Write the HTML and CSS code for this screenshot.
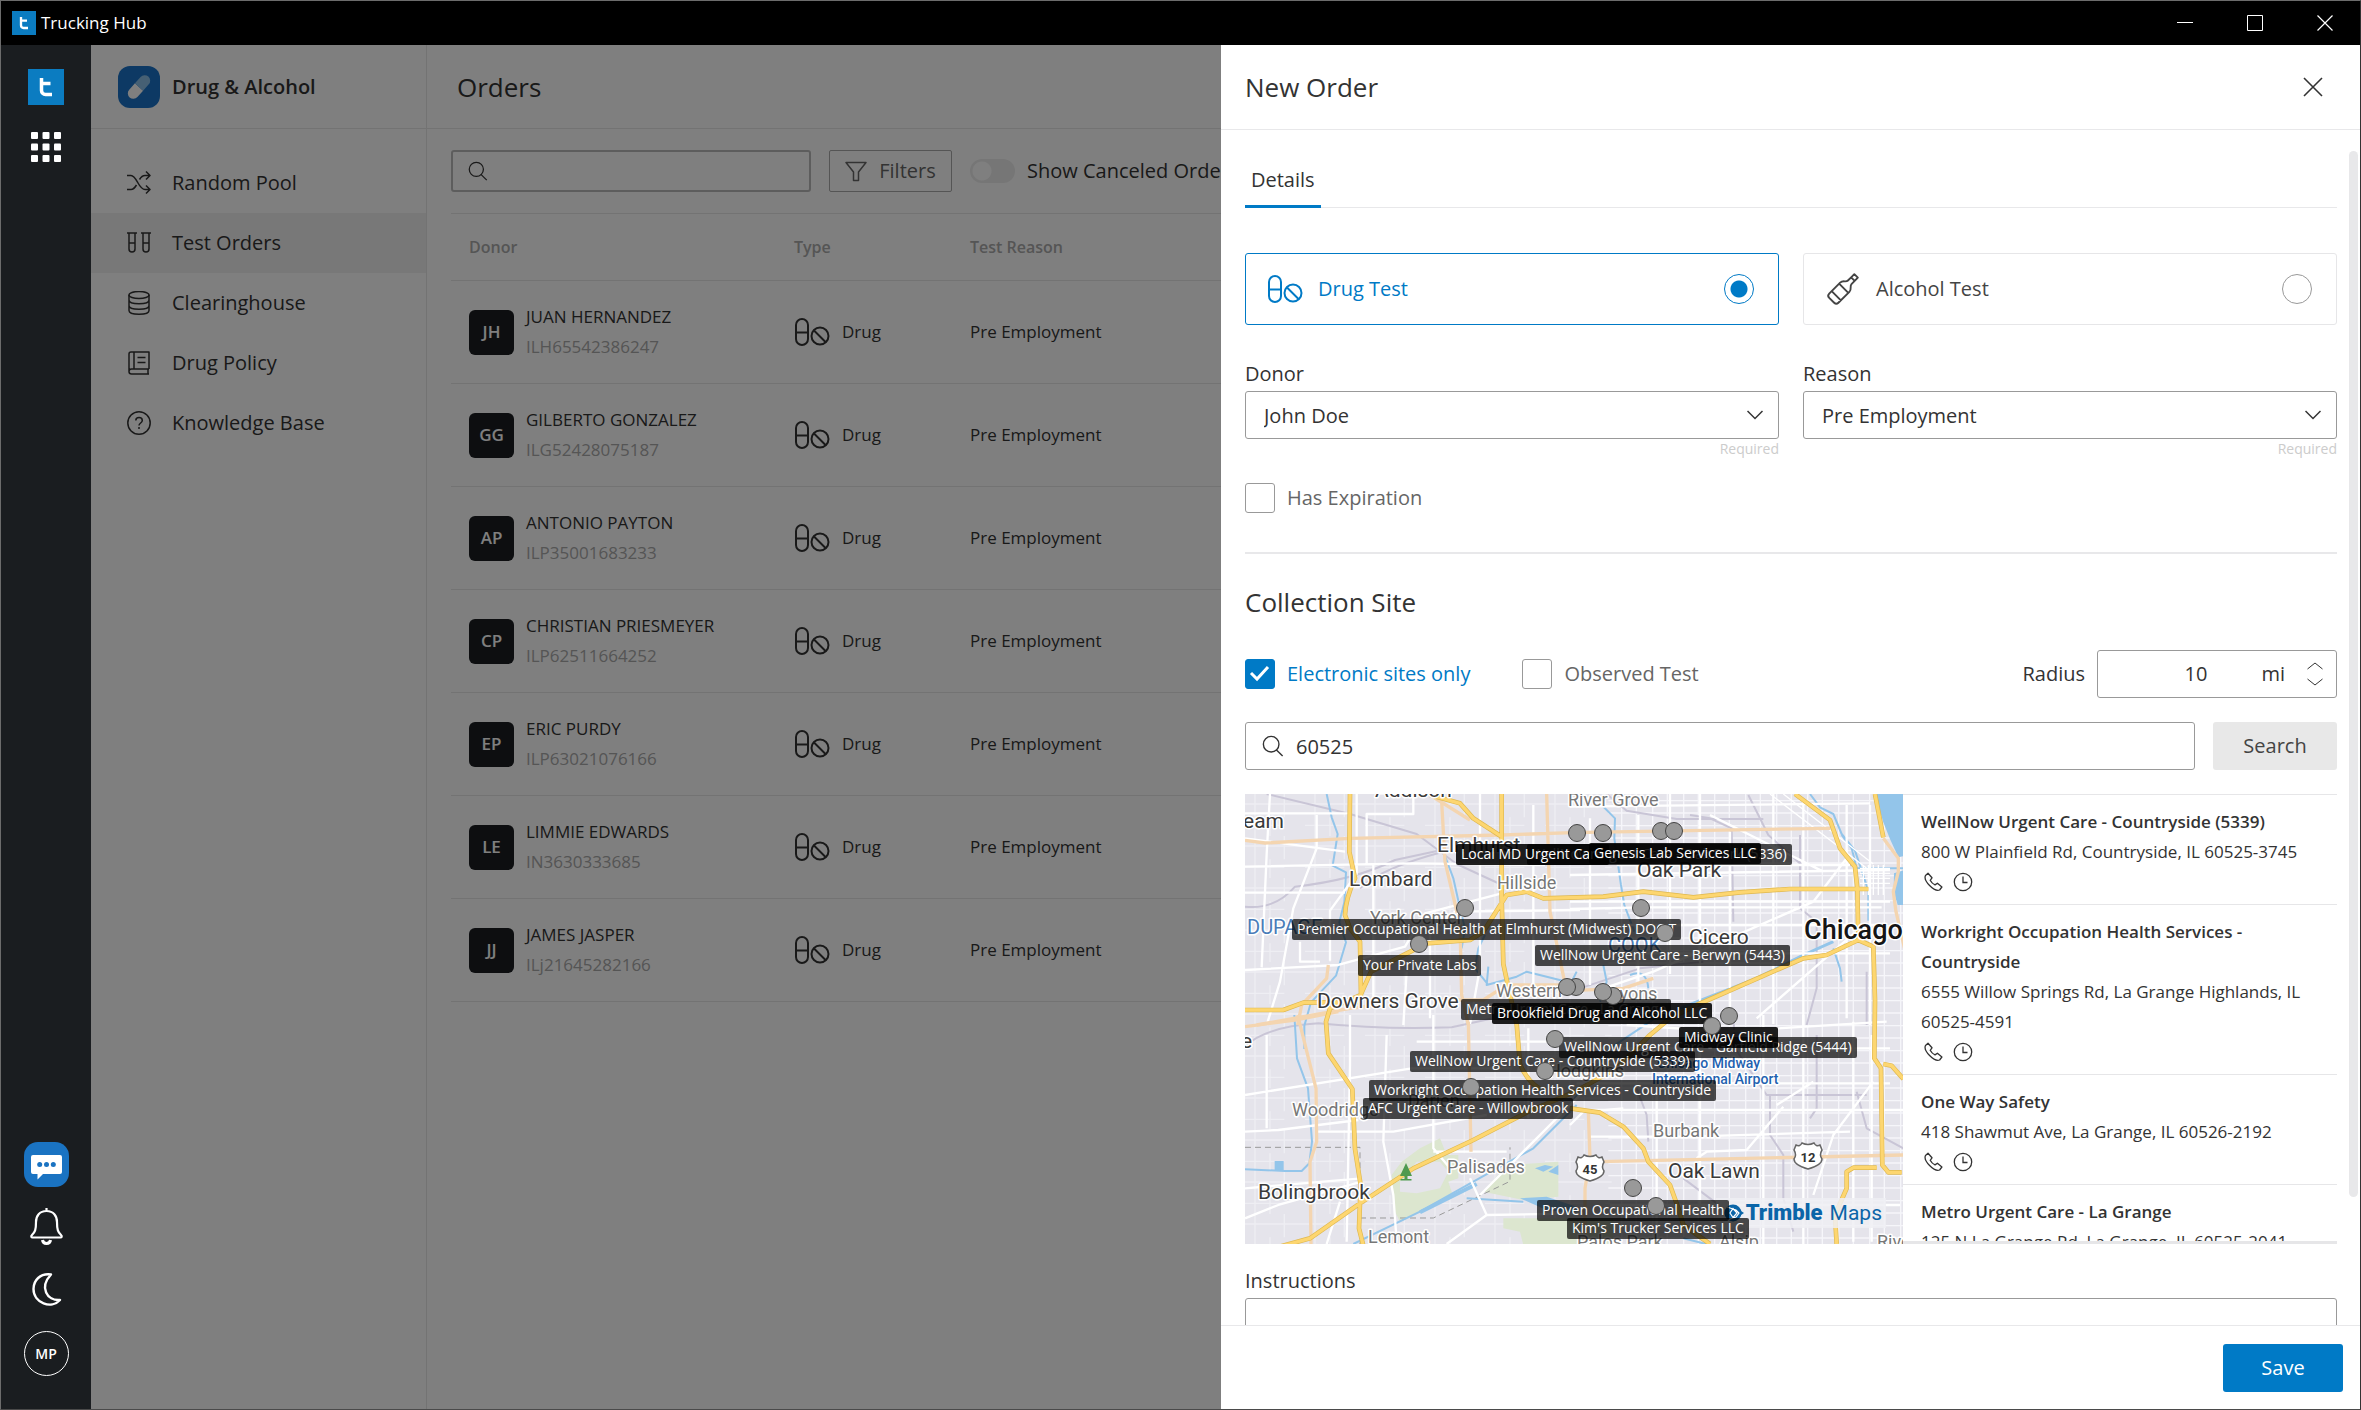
FILE: index.html
```html
<!DOCTYPE html>
<html lang="en">
<head>
<meta charset="utf-8">
<meta name="viewport" content="width=device-width, initial-scale=1">
<title>Trucking Hub</title>
<link rel="stylesheet" href="styles.css">
</head>
<body>
<svg class="sprite" aria-hidden="true">
  <symbol id="i-t" viewBox="0 0 36 36"><path d="M13.500 9v12.500a4 4 0 0 0 4 4h6.500M13.500 14.500h9" fill="none" stroke="#fff" stroke-width="3.500"/></symbol>
  <symbol id="i-drug" viewBox="0 0 36 28"><g fill="none" stroke="currentColor" stroke-width="2"><rect x="2" y="1" width="12" height="26" rx="6"/><path d="M2 14.500h12"/><circle cx="26" cy="18" r="8.500"/><path d="M20 12.500l12 12"/></g></symbol>
  <symbol id="i-search" viewBox="0 0 24 24"><g fill="none" stroke="currentColor" stroke-width="1.500"><circle cx="10" cy="10" r="8.500"/><path d="M15.500 16l7 7"/></g></symbol>
  <symbol id="i-x" viewBox="0 0 20 20"><path d="M1 1l18 18M19 1L1 19" fill="none" stroke="currentColor" stroke-width="1.600"/></symbol>
  <symbol id="i-phone" viewBox="0 0 20 20"><path d="M2.500 3.500L5 1.200l4 4.600-1.800 2.500c1 2 2.600 3.600 4.800 4.600l2.400-1.700 4.500 3.800-2.300 3c-2.400.9-6.500-.9-10-4.500S1.400 5.800 2.500 3.500z" fill="none" stroke="currentColor" stroke-width="1.300" stroke-linejoin="round"/></symbol>
  <symbol id="i-clock" viewBox="0 0 20 20"><g fill="none" stroke="currentColor" stroke-width="1.300"><circle cx="10" cy="10" r="8.700"/><path d="M10 4.500V10.500h4.500"/></g></symbol>
</svg>

<div class="window">
  <header class="titlebar">
    <svg class="titlebar-logo"><use href="#i-t"/></svg>
    <span class="titlebar-name">Trucking Hub</span>
    <div class="window-controls">
      <button aria-label="Minimize"><svg viewBox="0 0 16 16"><path d="M0 7.500h16" stroke="#fff"/></svg></button>
      <button aria-label="Maximize"><svg viewBox="0 0 16 16"><path d="M.5.5h15v15h-15z" fill="none" stroke="#fff"/></svg></button>
      <button aria-label="Close window"><svg viewBox="0 0 16 16"><path d="M.5.5l15 15M15.500.5l-15 15" stroke="#fff" stroke-width="1.200"/></svg></button>
    </div>
  </header>

  <div class="workspace">
    <nav class="rail" aria-label="Apps">
      <a href="#home" class="rail-logo" aria-label="Home"><svg><use href="#i-t"/></svg></a>
      <button class="rail-apps" aria-label="All apps"><svg viewBox="0 0 30 30" fill="#fff"><rect width="7" height="7" rx="1"/><rect x="11.500" width="7" height="7" rx="1"/><rect x="23" width="7" height="7" rx="1"/><rect y="11.500" width="7" height="7" rx="1"/><rect x="11.500" y="11.500" width="7" height="7" rx="1"/><rect x="23" y="11.500" width="7" height="7" rx="1"/><rect y="23" width="7" height="7" rx="1"/><rect x="11.500" y="23" width="7" height="7" rx="1"/><rect x="23" y="23" width="7" height="7" rx="1"/></svg></button>
      <div class="rail-bottom">
        <button class="rail-chat" aria-label="Messages"><svg viewBox="0 0 45 45"><path d="M9 13h27a2 2 0 0 1 2 2v15a2 2 0 0 1-2 2H19l-5.500 5.500V32H9a2 2 0 0 1-2-2V15a2 2 0 0 1 2-2z" fill="#fff"/><g fill="#1a73c2"><circle cx="15.700" cy="22.500" r="2.500"/><circle cx="22.500" cy="22.500" r="2.500"/><circle cx="29.300" cy="22.500" r="2.500"/></g></svg></button>
        <button aria-label="Notifications"><svg viewBox="0 0 45 45" fill="none" stroke="#fff" stroke-width="2.200"><path d="M22.500 3v3M22.500 6c-7 0-10.500 5-10.500 11 0 8-1 10-4 13-1.500 1.500-.5 2.500.5 2.500h28c1 0 2-1 .5-2.500-3-3-4-5-4-13 0-6-3.500-11-10.500-11z"/><path d="M18.500 35c.5 4.500 7.500 4.500 8 0" stroke-width="3"/></svg></button>
        <button aria-label="Dark mode"><svg viewBox="0 0 45 45" fill="none" stroke="#fff" stroke-width="2.400" stroke-linejoin="round"><path d="M27 6.500C16 5 9.500 12.500 9.500 21c0 14 18 20.500 26.500 11-13 1-21-12.500-9-25.500z"/></svg></button>
        <button class="rail-user" aria-label="Account">MP</button>
      </div>
    </nav>

    <aside class="sidebar">
      <div class="sidebar-head">
        <svg class="app-icon" viewBox="0 0 42 42"><rect width="42" height="42" rx="12" fill="#1a73c8"/><g transform="rotate(-48 21 21)"><path d="M21 15.500H12.500a5.500 5.500 0 0 0 0 11H21z" fill="#fff"/><path d="M21 15.500h8.500a5.500 5.500 0 0 1 0 11H21z" fill="#8cc0e8"/></g></svg>
        <span>Drug &amp; Alcohol</span>
      </div>
      <ul class="menu">
        <li><a href="#pool"><svg viewBox="0 0 24 24"><path d="M0 4.500h4c3 0 5 4 7 7.500s4 6.500 7 6.500h5M0 18.500h4c2.500 0 4-2 5.500-4.500M12.500 8.500c1.500-2.500 3-4 5.500-4h5M19 .5l4 4-4 4M19 14.500l4 4-4 4"/></svg>Random Pool</a></li>
        <li class="active"><a href="#orders"><svg viewBox="0 0 24 24"><path d="M0 2h10M14 2h10M2 2v16a3 3 0 0 0 6 0V2M16 2v16a3 3 0 0 0 6 0V2M2 12h6M16 12h6"/></svg>Test Orders</a></li>
        <li><a href="#clearing"><svg viewBox="0 0 24 24"><ellipse cx="12" cy="4" rx="10" ry="3.500"/><path d="M2 4v15.500c0 5 20 5 20 0V4M2 9c0 5 20 5 20 0M2 14.500c0 5 20 5 20 0"/></svg>Clearinghouse</a></li>
        <li><a href="#policy"><svg viewBox="0 0 24 24"><path d="M22 18V1H4a2 2 0 0 0-2 2v18M7 1v17M10.500 6.500h8M10.500 11.500h8M22 18H4.500a2.500 2.500 0 0 0 0 5H22M21 18v5"/></svg>Drug Policy</a></li>
        <li><a href="#kb"><svg viewBox="0 0 24 24"><circle cx="12" cy="12" r="11.200"/><path d="M8.800 9.500c0-4 6.500-4 6.500 0 0 2.500-3.300 2.500-3.300 5M12 16v2"/></svg>Knowledge Base</a></li>
      </ul>
    </aside>

    <main class="main">
      <div class="main-head"><h1>Orders</h1></div>
      <div class="content">
        <div class="toolbar">
          <div class="searchbox"><svg><use href="#i-search"/></svg><input type="search" aria-label="Search orders"></div>
          <button class="filters"><svg viewBox="0 0 22 22"><path d="M1 2.500h20L13.500 12v8.500h-5V12z" fill="none" stroke="currentColor" stroke-width="1.500" stroke-linejoin="round"/></svg>Filters</button>
          <label class="toggle"><input type="checkbox">Show Canceled Orders</label>
        </div>
        <table class="orders">
          <thead><tr><th class="c-donor">Donor</th><th class="c-type">Type</th><th>Test Reason</th></tr></thead>
          <tbody>
            <tr><td><div class="donor"><b>JH</b><p>JUAN HERNANDEZ<small>ILH65542386247</small></p></div></td><td><div class="type"><svg><use href="#i-drug"/></svg>Drug</div></td><td>Pre Employment</td></tr>
            <tr><td><div class="donor"><b>GG</b><p>GILBERTO GONZALEZ<small>ILG52428075187</small></p></div></td><td><div class="type"><svg><use href="#i-drug"/></svg>Drug</div></td><td>Pre Employment</td></tr>
            <tr><td><div class="donor"><b>AP</b><p>ANTONIO PAYTON<small>ILP35001683233</small></p></div></td><td><div class="type"><svg><use href="#i-drug"/></svg>Drug</div></td><td>Pre Employment</td></tr>
            <tr><td><div class="donor"><b>CP</b><p>CHRISTIAN PRIESMEYER<small>ILP62511664252</small></p></div></td><td><div class="type"><svg><use href="#i-drug"/></svg>Drug</div></td><td>Pre Employment</td></tr>
            <tr><td><div class="donor"><b>EP</b><p>ERIC PURDY<small>ILP63021076166</small></p></div></td><td><div class="type"><svg><use href="#i-drug"/></svg>Drug</div></td><td>Pre Employment</td></tr>
            <tr><td><div class="donor"><b>LE</b><p>LIMMIE EDWARDS<small>IN3630333685</small></p></div></td><td><div class="type"><svg><use href="#i-drug"/></svg>Drug</div></td><td>Pre Employment</td></tr>
            <tr><td><div class="donor"><b>JJ</b><p>JAMES JASPER<small>ILj21645282166</small></p></div></td><td><div class="type"><svg><use href="#i-drug"/></svg>Drug</div></td><td>Pre Employment</td></tr>
          </tbody>
        </table>
      </div>
    </main>

    <div class="scrim"></div>

    <form class="drawer" aria-label="New Order">
      <div class="drawer-head"><h2>New Order</h2><button type="button" class="close" aria-label="Close"><svg><use href="#i-x"/></svg></button></div>
      <div class="drawer-body">
        <div class="tabs"><button type="button" class="tab">Details</button></div>

        <div class="pair">
          <label class="card selected"><svg class="card-icon"><use href="#i-drug"/></svg><span>Drug Test</span><input type="radio" name="test" checked></label>
          <label class="card"><svg class="card-icon" viewBox="0 0 36 28"><g transform="translate(18 14) rotate(45)" fill="none" stroke="currentColor" stroke-width="1.900" stroke-linejoin="round"><path d="M-2.500-18.500h5v4.500h-5zM-2.500-14v4.500c0 3-4 3-4 7V13a3 3 0 0 0 3 3h7a3 3 0 0 0 3-3V-2.500c0-4-4-4-4-7V-14M-6.500-1h13M-6.500 9.500h13"/></g></svg><span>Alcohol Test</span><input type="radio" name="test"></label>
        </div>

        <div class="pair fields">
          <div class="field"><label for="donor">Donor</label>
            <div class="select"><select id="donor"><option>John Doe</option></select><svg viewBox="0 0 16 10"><path d="M.5 1l7.500 7.500L15.500 1" fill="none" stroke="currentColor" stroke-width="1.500"/></svg></div>
            <span class="hint">Required</span></div>
          <div class="field"><label for="reason">Reason</label>
            <div class="select"><select id="reason"><option>Pre Employment</option></select><svg viewBox="0 0 16 10"><path d="M.5 1l7.500 7.500L15.500 1" fill="none" stroke="currentColor" stroke-width="1.500"/></svg></div>
            <span class="hint">Required</span></div>
        </div>

        <label class="check"><input type="checkbox">Has Expiration</label>

        <h2 class="section">Collection Site</h2>
        <div class="options">
          <label class="check on"><input type="checkbox" checked>Electronic sites only</label>
          <label class="check"><input type="checkbox">Observed Test</label>
          <label class="radius-label" for="radius">Radius</label>
          <div class="radius"><input id="radius" type="text" inputmode="numeric" value="10"><span>mi</span>
            <svg viewBox="0 0 16 24"><path d="M.5 7L8 1l7.500 6M.5 17L8 23l7.500-6" fill="none" stroke="currentColor"/></svg></div>
        </div>
        <div class="lookup">
          <div class="searchbox"><svg><use href="#i-search"/></svg><input type="text" aria-label="ZIP code" value="60525"></div>
          <button type="button" class="btn">Search</button>
        </div>

        <div class="sites">
          <div class="map">
            <svg class="map-art" viewBox="0 0 658 450" preserveAspectRatio="xMinYMin slice">
              <defs>
                <pattern id="fine" width="93" height="75" patternUnits="userSpaceOnUse"><path d="M14 0v75M58 0v75M0 20h93M0 57h93" stroke="#f6f6fa" stroke-width="4" fill="none"/></pattern>
                <pattern id="block" width="180" height="126" patternUnits="userSpaceOnUse"><path d="M30 0v126M118 0v70M75 70v56M0 30h180M0 94h118" stroke="#f8f8fb" stroke-width="4" fill="none"/></pattern>
              </defs>
              <rect width="658" height="450" fill="#e5e4eb"/>
              <g transform="scale(.33333)" fill="none" stroke-linejoin="round">
                <path d="M0 0H1100V1350H0z" fill="url(#block)" opacity=".5"/>
                <path d="M1090 0H1974V1350H1090z" fill="url(#fine)"/>
                <g transform="translate(-15 663)">
                  <path d="M455 480l30-40 55-40 60-30 20 50h35v70l-30 10 15 45-160 75-20-40z" fill="#dce6cf"/>
                  <path d="M480 500l50-60h70l25 30-25 50-70 15-50-5z" fill="#e5e4eb"/>
                  <path d="M730 530l70-80 155-10v105l-105 10zM790 610h330v80H850l-10-40-50-10z" fill="#dce6cf"/>
                  <path d="M840 550l80-5 90 30v20l-90-10zM104 438h27v28h-27zM885 460l30-10 25 5-30 15zM925 470l30-20v30z" fill="#93c5ea"/>
                </g>
                <!-- Lake Michigan shoreline -->
                <g transform="translate(975 -27)"><path d="M915 27h90v185l-20 5-25-55-20-50zM972 265l33-10v105h-22l-12-40z" fill="#93c5ea"/></g>
                <!-- rail lines -->
                <g stroke="#c9c5d6" stroke-width="6">
                  <g transform="translate(-15 -27)"><path d="M80 27l250 60 200 60 120 90 130 60M15 365q90 10 150-60 180-20 300-80l140-30M360 310q60-60 250-110"/></g>
                  <g transform="translate(975 -27)"><path d="M110 27l60 50 150 25 260 0M360 90l60 10 65 30 5 280M690 150v220l50 40v200l-30 110M535 30l60 120 100 90h150M30 610l180-60 190-20M890 560v160"/></g>
                  <g transform="translate(975 663)"><path d="M200 220l30 80 5 80M490 0l5 100 95 140h300M740 60v220l-20 30M600 240v120l40 60v130l30 100M860 230l30 110 110 60M340 490l120 90"/></g>
                  <g transform="translate(-15 663)"><path d="M15 95q60-60 220-70 200 20 400 12L760 10"/></g>
                </g>
                <!-- county line -->
                <path d="M0 1060h345v520M345 1272h220l230-110V1060" stroke="#999" stroke-width="3" stroke-dasharray="18 12"/>
                <!-- rivers and canals -->
                <g stroke="#93c5ea" stroke-width="6">
                  <g transform="translate(-15 -27)"><path d="M260 27l15 70 18 50-15 95 40 20-5 90-15 60 20 60-30 100-75 80-20 70v70M610 200l30 80 20 90 15 60-10 60M735 450l-20 40-10 60 40 50M745 545l-5 55 90-25 30-15 120 30"/></g>
                  <g transform="translate(-15 663)"><path d="M163 0l8 130 33 90 12 160-8 65-23 23h-50l-120-5M1010 270L880 400 700 500 540 590 340 687M680 550l170 10"/><path d="M540 592l170-85" stroke-width="12"/></g>
                  <g transform="translate(975 -27)"><path d="M95 60l40 40-2 60 20 140 10 60 30 80M20 560l-20 40M100 540l10 50-20 60M180 570q50-20 55 40M790 490l20 60 5 40M720 27l30 40 40 20 25 60 40 50 40 120v90M815 150l30 40 15 60M860 250h140"/><path d="M790 470l-90 40-140 70-230 90" stroke-width="9"/></g>
                  <g transform="translate(975 663)"><path d="M270 0L120 100 0 270M340 670l80 20"/></g>
                </g>
                <!-- local roads -->
                <g stroke="#fff" stroke-width="7">
                  <g transform="translate(-15 -27)"><path d="M350 27v240l-80 110v150M15 555l280-15 200-55 60-100 230-60M90 27l-10 180-15 340M15 323h300M15 245l500-10 400 5M230 90v100l-70 180-40 220-40 130M520 27v60H380v150M15 85h310M720 27v520l-30 170M500 560l-10 160M570 400v300M400 240v400M880 60v560M15 160l300 40M640 380l380-5M180 470v60h60"/></g>
                  <g transform="translate(-15 663)"><path d="M330 0v150l-10 530M15 350l100-5 240-30M15 240l500-80h300M80 60v280M440 60l-10 320 30 160 10 140M580 0v400l50 60M530 80h500M15 610l100-40 250-70M690 490l50 110 290-5M740 600L620 687M720 540l170-170 130-130M300 560l-40 127M15 520l350-30M580 410h220M230 350h230l280-50M865 40v270"/></g>
                  <g transform="translate(975 -27)"><path d="M0 372l215-5h720M60 100v500M205 90v500M300 27v540M390 27v690M480 140v580M610 27v690M700 40v680M830 60v640M900 60v660M0 65l900-10M130 420h800M0 270l960-15M140 240h700M100 610l150-50 480-210 100-130M560 700l240-210 70-60M0 505h960M0 350h960M420 90l340 170"/></g>
                  <g transform="translate(975 663)"><path d="M0 100h960M0 285h1000M20 205h940M60 365h300l480-15M380 430l30-20 120-5 110-130M620 270l110-70M260 210v480M390 100v480M580 0v687M700 0v687M730 540l60-180 120-160M0 330l40-40 120-10M120 570h870M850 20v660M905 60v620M170 30l300 20 480-30"/></g>
                </g>
                <g transform="translate(975 -27)" stroke="#fff" stroke-width="4"><path d="M600 27l300 230M640 27l270 210M870 250h90M870 265h90M870 280h90M870 295h90M880 240v90M895 240v90M910 240v90M925 240v90M940 240v90"/></g>
                <!-- arterials -->
                <g stroke="#f4d5b0" stroke-width="10">
                  <g transform="translate(-15 -27)"><path d="M15 166l60 8 255-14 455-10 235-8M605 50l10 180 45 190 5 210 20 90M920 27l10 353 50 240M265 540l-5 40-75 80-12 60M50 720l280-50 80-10M600 645h130l70-45h230M570 30l120 75"/></g>
                  <g transform="translate(-15 663)"><path d="M173 0l55 220 2 160-20 60 3 250M15 35l150-20 130-25M685 20l8 390"/></g>
                  <g transform="translate(975 -27)"><path d="M0 143l780-13M0 617l160-7 90-30M940 160l45 60v40l-15 60 8 60 28 120"/></g>
                  <g transform="translate(975 663)"><path d="M90 440l910-20M55 290l5 140-15 90v170"/></g>
                </g>
                <!-- expressways -->
                <g stroke="#dfb84f" stroke-width="14">
                  <path id="hw" d="M315 0l-2 173 17 80q-28 60-30 110l15 40 30 40 3 160L255 643l-12 40 7 95 72 107 8 180 17 108-5 130 15 60M0 648h115l60-22 170-2M348 600l30-67 167-85 130-10 40-25 70-110 60-10 50 20 180-5 120-15 150 17 140-15 150-10h235M555 3l90 25 40 45 85 55M770 0v310l5 200 15 70 25 110 10 120q20 50 60 75M1650 0l105 78 30 85 45 55 7 65 3 155 45 20 5 160-2 175 20 30 4 290 18 22h40M1915 810l25 5 35 40M1890 0l25 130M1840 438l-95 45-70 10-160 70-160 70-80 40-60 50-100 100-125 70-140 60-165 85-180 85-160 105-150 105L60 1370M975 943l90 13 70 42 60 65 15 40 65 70 25 70 15 50 80 57M1775 1350l-5-87 35-80v-50l20-12h70"/>
                </g>
                <use href="#hw" stroke="#fdd670" stroke-width="10"/>
              </g>
              <g class="city">
                <text x="130" y="3">Addison</text><text x="-2" y="34">eam</text><text x="192" y="58">Elmhurst</text><text x="104" y="92">Lombard</text><text x="72" y="214">Downers Grove</text><text x="392" y="83">Oak Park</text><text x="444" y="150">Cicero</text><text x="13" y="405">Bolingbrook</text><text x="423" y="384">Oak Lawn</text><text x="-4" y="254">e</text>
              </g>
              <g class="town">
                <text x="252" y="95">Hillside</text><text x="125" y="130">York Center</text><text x="251" y="203">Western</text><text x="323" y="12">River Grove</text><text x="366" y="206">Lyons</text><text x="47" y="322">Woodridge</text><text x="202" y="379">Palisades</text><text x="123" y="449">Lemont</text><text x="163" y="313">Darien</text><text x="303" y="283">Hodgkins</text><text x="408" y="343">Burbank</text><text x="332" y="454">Palos Park</text><text x="474" y="454">Alsip</text><text x="632" y="454">Riverdale</text>
              </g>
              <g class="county"><text x="2" y="140">DUPAGE</text><text x="363" y="158">COOK</text></g>
              <g class="airport"><text x="412" y="274">Chicago Midway</text><text x="407" y="290">International Airport</text></g>
              <text class="metro" x="559" y="145">Chicago</text>
              <g fill="#fff" stroke="#666" stroke-width="1.500"><path d="M333 363q4 2 6-2 6 3 12 0 2 4 6 2l2 5q-3 5 0 9 0 6-14 10-14-4-14-10 3-4 0-9z"/><path d="M551 351q4 2 6-2 6 3 12 0 2 4 6 2l2 5q-3 5 0 9 0 6-14 10-14-4-14-10 3-4 0-9z"/></g>
              <g class="shield"><text x="345" y="380">45</text><text x="563" y="368">12</text></g>
              <path d="M161 369l6 13h-4.500v3h4v1.500h-11V385h4v-3H155z" fill="#4f9a4f"/>
            </svg>

            <div class="brand"><svg viewBox="0 0 20 20"><circle cx="9" cy="10" r="8.500" fill="#0b65a8"/><path d="M14 6l6 4-6 4z" fill="#0b65a8"/><path d="M3 4l9 3 3 3-3 4-9 3M9 5.500l-3 4.500 3 4.500 4-4.500z" fill="none" stroke="#fff" stroke-width="1.200"/></svg><b>Trimble</b><span>Maps</span></div>

            <div class="tag" style="left:282px;top:50px">WellNow Urgent Care - Oak Park (5336)</div>
            <div class="tag dark" style="left:211px;top:50px">Local MD Urgent Care</div>
            <div class="tag dark" style="left:344px;top:49px">Genesis Lab Services LLC</div>
            <div class="tag" style="left:47px;top:125px">Premier Occupational Health at Elmhurst (Midwest) DOC T</div>
            <div class="tag" style="left:290px;top:151px">WellNow Urgent Care - Berwyn (5443)</div>
            <div class="tag" style="left:216px;top:205px">Metro Urgent Care - La Grange</div>
            <div class="tag dark" style="left:247px;top:209px">Brookfield Drug and Alcohol LLC</div>
            <div class="tag" style="left:314px;top:243px">WellNow Urgent Care - Garfield Ridge (5444)</div>
            <div class="tag dark" style="left:434px;top:233px">Midway Clinic</div>
            <div class="tag" style="left:165px;top:257px">WellNow Urgent Care - Countryside (5339)</div>
            <div class="tag" style="left:124px;top:286px">Workright Occupation Health Services - Countryside</div>
            <div class="tag" style="left:118px;top:304px">AFC Urgent Care - Willowbrook</div>
            <div class="tag" style="left:292px;top:406px">Proven Occupational Health</div>
            <div class="tag" style="left:322px;top:424px">Kim's Trucker Services LLC</div>
            <div class="tag" style="left:113px;top:161px">Your Private Labs</div>
            <i style="left:332px;top:39px"></i><i style="left:358px;top:39px"></i><i style="left:416px;top:37px"></i><i style="left:429px;top:37px"></i><i style="left:220px;top:114px"></i><i style="left:396px;top:114px"></i><i style="left:420px;top:139px"></i><i style="left:174px;top:150px"></i><i style="left:331px;top:193px"></i><i style="left:322px;top:193px"></i><i style="left:368px;top:202px"></i><i style="left:358px;top:198px"></i><i style="left:484px;top:222px"></i><i style="left:467px;top:232px"></i><i style="left:310px;top:245px"></i><i style="left:300px;top:277px"></i><i style="left:226px;top:293px"></i><i style="left:388px;top:394px"></i><i style="left:411px;top:412px"></i>
          </div>
          <ul class="site-list">
            <li><strong>WellNow Urgent Care - Countryside (5339)</strong><span>800 W Plainfield Rd, Countryside, IL 60525-3745</span><div><svg><use href="#i-phone"/></svg><svg><use href="#i-clock"/></svg></div></li>
            <li><strong>Workright Occupation Health Services - Countryside</strong><span>6555 Willow Springs Rd, La Grange Highlands, IL 60525-4591</span><div><svg><use href="#i-phone"/></svg><svg><use href="#i-clock"/></svg></div></li>
            <li><strong>One Way Safety</strong><span>418 Shawmut Ave, La Grange, IL 60526-2192</span><div><svg><use href="#i-phone"/></svg><svg><use href="#i-clock"/></svg></div></li>
            <li><strong>Metro Urgent Care - La Grange</strong><span>125 N La Grange Rd, La Grange, IL 60525-2041</span></li>
          </ul>
        </div>

        <div class="field notes"><label for="notes">Instructions</label><textarea id="notes"></textarea></div>
        <div class="scrollbar"></div>
      </div>
      <div class="drawer-foot"><button type="button" class="btn primary">Save</button></div>
    </form>
  </div>
</div>
</body>
</html>
```
FILE: styles.css
```css
* { box-sizing: border-box; }
body { margin: 0; font: 20px/30px "Open Sans", "Noto Sans", sans-serif; color: #333; }
h1, h2, p, ul { margin: 0; padding: 0; font-weight: 400; }
ul { list-style: none; }
button, input, select, textarea { font: inherit; color: inherit; background: none; border: 0; padding: 0; margin: 0; outline: 0; }
input, select, textarea { min-width: 0; }
a { color: inherit; text-decoration: none; }
svg { display: block; flex: none; }
.sprite { position: absolute; width: 0; height: 0; }

.window { height: 100vh; display: flex; flex-direction: column; border: 1px solid #6c6c6c; border-right-color: #333; border-bottom-color: #4a4a4a; overflow: hidden; }

.titlebar { flex: none; height: 44px; background: #000; color: #fff; display: flex; align-items: center; gap: 5px; padding-left: 11px; font-size: 17px; }
.titlebar-logo { width: 24px; height: 24px; background: #0b7cc1; }
.window-controls { margin-left: auto; display: flex; }
.window-controls button { width: 70px; height: 44px; display: grid; place-items: center; }
.window-controls svg { width: 16px; height: 16px; }

.workspace { flex: 1; min-height: 0; display: flex; position: relative; background: #fff; }

.rail { flex: none; width: 90px; background: #1a1d20; display: flex; flex-direction: column; align-items: center; padding: 24px 0 33px; position: relative; z-index: 2; }
.rail-logo svg { width: 36px; height: 36px; background: #0b7cc1; }
.rail-apps { margin-top: 27px; }
.rail-apps svg { width: 30px; height: 30px; }
.rail-bottom { margin-top: auto; display: flex; flex-direction: column; gap: 18px; }
.rail-bottom button { width: 45px; height: 45px; }
.rail-chat { background: #1a73c2; border-radius: 14px; }
.rail-user { border: 1px solid #fff; border-radius: 50%; color: #fff; font-size: 14px; font-weight: 600; }

.sidebar { flex: none; width: 336px; border-right: 1px solid #e6e6e6; }
.sidebar-head, .main-head { height: 84px; border-bottom: 1px solid #e6e6e6; display: flex; align-items: center; }
.sidebar-head { gap: 12px; padding-left: 27px; font-weight: 600; }
.app-icon { width: 42px; height: 42px; }
.menu { padding-top: 24px; }
.menu a { display: flex; align-items: center; gap: 21px; height: 60px; padding-left: 36px; }
.menu svg { width: 24px; height: 24px; fill: none; stroke: #333; stroke-width: 1.500; stroke-linejoin: round; }
.menu .active { background: #f0f0f0; }

.main { flex: 1; min-width: 0; }
.main-head { padding-left: 30px; }
h1, h2 { font-size: 26px; line-height: 36px; }
.content { padding: 21px 16px 0 24px; }
.toolbar { display: flex; align-items: center; gap: 18px; padding-bottom: 21px; }
.searchbox { display: flex; align-items: center; gap: 12px; border: 2px solid #bbb; border-radius: 3px; padding-left: 16px; }
.searchbox svg { width: 22px; height: 22px; }
.searchbox input { flex: 1; height: 38px; }
.toolbar .searchbox { width: 360px; padding-left: 15px; }
.toolbar .searchbox svg { width: 20px; height: 20px; }
.filters { height: 42px; width: 123px; border: 1px solid #aaa; border-radius: 2px; display: flex; align-items: center; justify-content: center; gap: 12px; color: #666; }
.filters svg { width: 22px; height: 22px; }
.toggle { display: flex; align-items: center; gap: 12px; white-space: nowrap; }
.toggle input { appearance: none; width: 45px; height: 24px; border-radius: 12px; background: radial-gradient(circle at 12px 12px, #fff 9px, #ececec 10px); }

.orders { width: 100%; border-collapse: collapse; table-layout: fixed; text-align: left; font-size: 17px; }
.orders tr { border-top: 1px solid #e6e6e6; }
.orders tbody tr:last-child { border-bottom: 1px solid #e6e6e6; }
.orders th { height: 67px; padding: 0 18px; color: #aaa; font-size: 16px; font-weight: 600; }
.orders td { height: 103px; padding: 0 18px; }
.c-donor { width: 325px; }
.c-type { width: 176px; }
.donor, .type { display: flex; align-items: center; white-space: nowrap; }
.donor { gap: 12px; }
.donor b { width: 45px; height: 45px; border-radius: 6px; background: #1a1d20; color: #fff; display: grid; place-items: center; font-weight: 600; }
.donor small { display: block; font-size: 17px; color: #aaa; }
.type { gap: 12px; }
.type svg { width: 36px; height: 28px; }

.scrim { position: absolute; inset: 0; background: rgba(0, 0, 0, .5); }

.drawer { position: absolute; top: 0; right: 0; bottom: 0; z-index: 3; width: 1139px; max-width: 100%; background: #fff; display: flex; flex-direction: column; }
.drawer-head { flex: none; height: 85px; border-bottom: 1px solid #e8e8ea; display: flex; align-items: center; justify-content: space-between; padding: 0 37px 0 24px; }
.close svg { width: 20px; height: 20px; }
.drawer-body { flex: 1; min-height: 0; overflow: hidden; position: relative; padding: 30px 23px 0 24px; }
.tabs { display: flex; height: 48px; border-bottom: 1px solid #e8e8ea; }
.tab { height: 48px; padding: 0 6px 6px; border-bottom: 3px solid #007ac6; }
.pair { display: grid; grid-template-columns: 1fr 1fr; gap: 24px; margin-top: 45px; }
.card { display: flex; align-items: center; height: 72px; border: 1px solid #e6e6e8; border-radius: 3px; padding: 0 24px 0 21px; color: #444; }
.card-icon { width: 36px; height: 28px; margin-right: 15px; overflow: visible; }
.card input { appearance: none; width: 30px; height: 30px; margin-left: auto; border: 1px solid #999; border-radius: 50%; }
.card.selected { border-color: #007ac6; color: #007ac6; }
.card.selected input { border-color: #007ac6; background: radial-gradient(circle, #007ac6 8px, transparent 9px); }
.fields { margin-top: 34px; }
.field { display: flex; flex-direction: column; }
.field label { padding-bottom: 2px; }
.select { display: grid; align-items: center; }
.select select { grid-area: 1 / 1; appearance: none; width: 100%; height: 48px; border: 1px solid #999; border-radius: 3px; padding: 2px 18px 0; }
.select svg { grid-area: 1 / 1; justify-self: end; width: 16px; height: 10px; margin-right: 16px; pointer-events: none; }
.hint { align-self: flex-end; font-size: 14px; line-height: 20px; color: #ccc; }
.check { display: flex; align-items: center; gap: 12px; color: #666; }
.drawer-body > .check { margin-top: 24px; }
.check input { appearance: none; width: 30px; height: 30px; border: 1px solid #999; border-radius: 3px; }
.check.on { color: #007ac6; }
.check.on input { border-color: #007ac6; background: #007ac6 url("data:image/svg+xml,%3Csvg xmlns='http://www.w3.org/2000/svg' viewBox='0 0 30 30'%3E%3Cpath d='M6 14l6 6L23 8' fill='none' stroke='white' stroke-width='3'/%3E%3C/svg%3E") center / 30px; }
.section { margin-top: 39px; padding: 30px 0; border-top: 2px solid #e8e8ea; }
.options { display: flex; align-items: center; gap: 52px; }
.radius-label { margin-left: auto; }
.radius { display: flex; align-items: center; width: 240px; height: 48px; margin-left: -40px; border: 1px solid #999; border-radius: 3px; padding: 0 13px 0 12px; }
.radius input { flex: 1; text-align: right; margin-right: 54px; }
.radius svg { width: 16px; height: 24px; margin-left: 22px; }
.lookup { display: flex; gap: 18px; margin-top: 24px; }
.lookup .searchbox { flex: 1; height: 48px; border: 1px solid #999; }
.btn { width: 124px; height: 48px; border-radius: 3px; background: #e8e8e8; color: #444; }
.primary { width: 120px; background: #007ac6; color: #fff; }

.sites { display: grid; grid-template-columns: 658fr 434fr; height: 450px; margin-top: 24px; }
.map { position: relative; overflow: hidden; }
.map-art { width: 100%; height: 100%; }
.map-art text { font-family: Roboto, sans-serif; paint-order: stroke; stroke: #fff; stroke-width: 3px; stroke-linejoin: round; }
.city text { font-size: 21px; fill: #3a3a3a; }
.town text { font-size: 18px; fill: #777; }
.county text { font-size: 20px; fill: #4a7cb8; }
.airport text { font-size: 14px; font-weight: 500; fill: #1f62b0; }
.map-art .metro { font-size: 27px; font-weight: 500; fill: #151515; }
.shield text { font-size: 13px; font-weight: 700; fill: #333; stroke: none; text-anchor: middle; }
.brand { position: absolute; right: 17px; bottom: 16px; height: 30px; display: flex; align-items: center; padding: 0 4px 0 8px; background: rgba(238, 238, 243, .85); color: #0b65a8; font: 21px/30px Roboto, sans-serif; }
.brand svg { width: 20px; height: 20px; margin-right: 2px; }
.brand b { font-size: 22px; font-weight: 900; margin-right: 7px; }
.tag { position: absolute; height: 21px; padding: 0 5px; border-radius: 2px; background: rgba(0, 0, 0, .7); color: #fff; font-size: 14px; line-height: 20px; white-space: nowrap; }
.tag.dark { background: rgba(0, 0, 0, .88); }
.map i { position: absolute; width: 18px; height: 18px; margin: -9px; border: 1px solid #444; border-radius: 50%; background: #999; }

.site-list { border-top: 1px solid #e6e6e8; border-bottom: 3px solid #e6e6e8; overflow: hidden; font-size: 17px; }
.site-list li { padding: 12px 18px 7px; border-bottom: 1px solid #e6e6e8; }
.site-list strong, .site-list span { display: block; font-weight: 400; }
.site-list strong { font-weight: 600; }
.site-list div { display: flex; align-items: center; gap: 10px; height: 30px; padding-left: 2px; }
.site-list svg { width: 20px; height: 20px; }
.notes { margin-top: 22px; }
.notes textarea { height: 120px; border: 1px solid #999; border-radius: 3px; resize: none; }
.scrollbar { position: absolute; top: 21px; right: 2px; width: 9px; height: 1046px; border-radius: 5px; background: #e8e8ea; }
.drawer-foot { flex: none; height: 84px; border-top: 1px solid #e8e8ea; display: flex; align-items: center; justify-content: flex-end; padding-right: 17px; }
```
